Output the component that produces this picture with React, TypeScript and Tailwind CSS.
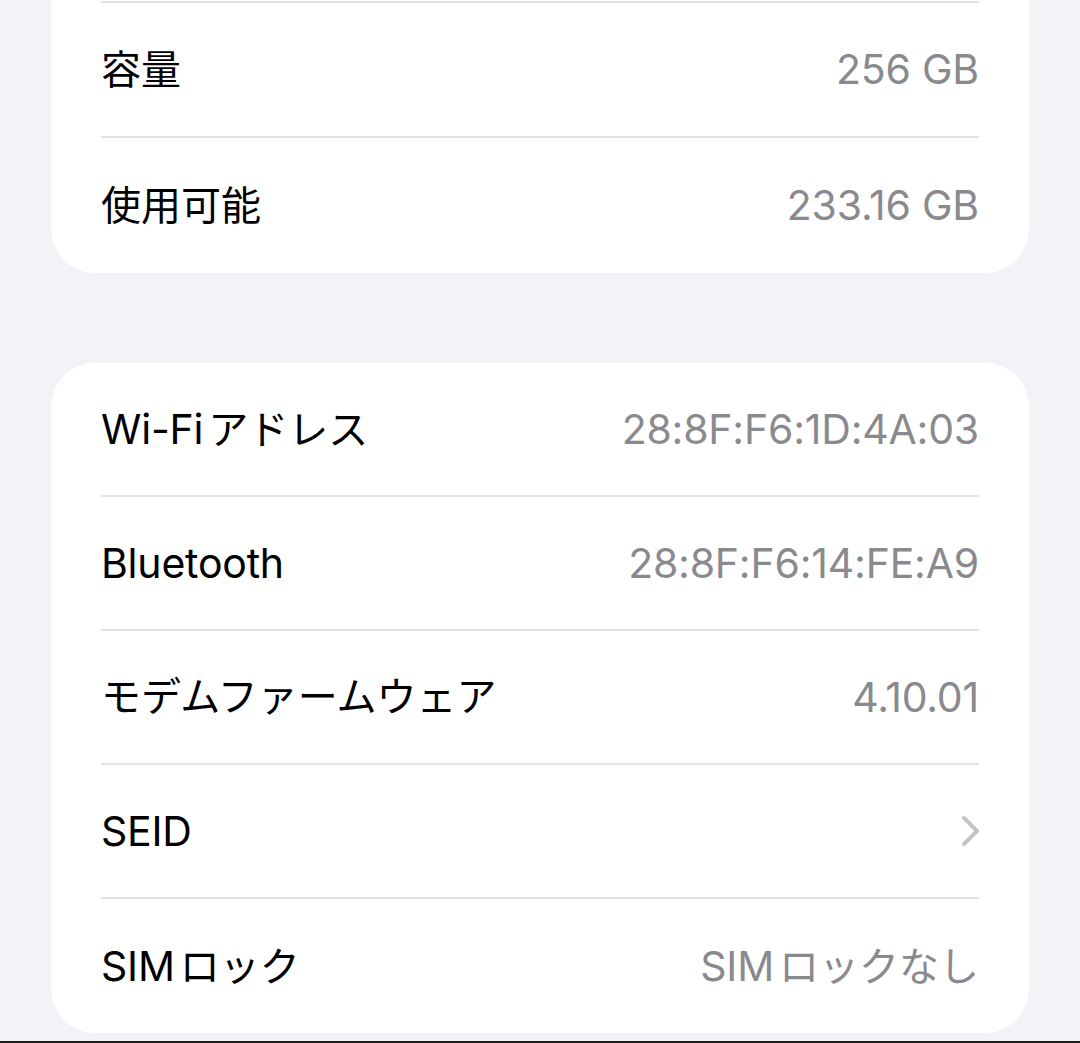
import React from "react";

type Row = { label: string; value?: string; chevron?: boolean };

const storageRows: Row[] = [
  { label: "容量", value: "256 GB" },
  { label: "使用可能", value: "233.16 GB" },
];

const networkRows: Row[] = [
  { label: "Wi-Fiアドレス", value: "28:8F:F6:1D:4A:03" },
  { label: "Bluetooth", value: "28:8F:F6:14:FE:A9" },
  { label: "モデムファームウェア", value: "4.10.01" },
  { label: "SEID", chevron: true },
  { label: "SIMロック", value: "SIMロックなし" },
];

// split text into latin / japanese runs so each gets its own size
const isCjk = (ch: string) => /[\u3000-\u30ff\u4e00-\u9fff]/.test(ch);

function MixedText({ text }: { text: string }) {
  const runs: { cjk: boolean; s: string }[] = [];
  for (const ch of text) {
    const cjk = isCjk(ch);
    const last = runs[runs.length - 1];
    if (last && last.cjk === cjk) last.s += ch;
    else runs.push({ cjk, s: ch });
  }
  return (
    <>
      {runs.map((r, i) =>
        r.cjk ? (
          <span key={i} className={"text-[40px] " + (i > 0 ? "ml-[5px]" : "")}>
            {r.s}
          </span>
        ) : (
          <span key={i} className="text-[41px] tracking-[-0.005em]">
            {r.s}
          </span>
        )
      )}
    </>
  );
}

function Chevron() {
  return (
    <svg width="20" height="32" viewBox="0 0 20 32" className="-mr-[2px]">
      <path
        d="M3 3 L16 16 L3 29"
        fill="none"
        stroke="#c4c4c7"
        strokeWidth="4"
        strokeLinecap="round"
        strokeLinejoin="round"
      />
    </svg>
  );
}

function InfoRow({ label, value, chevron, last, height }: Row & { last: boolean; height: string }) {
  return (
    <div
      className={
        "flex items-center justify-between mx-[50px] leading-none " +
        height +
        (last ? "" : " border-b-2 border-[#e3e3e8]")
      }
    >
      <span className="text-black">
        <MixedText text={label} />
      </span>
      {chevron ? (
        <Chevron />
      ) : (
        <span className="text-[#8a8a8e]">
          <MixedText text={value ?? ""} />
        </span>
      )}
    </div>
  );
}

export default function App() {
  return (
    <div
      className="h-[1043px] w-[1080px] overflow-hidden bg-[#f2f2f7] flex flex-col"
      style={{ fontFamily: '"Inter", "Noto Sans CJK JP", sans-serif' }}
    >
      <div className="mx-[51px] bg-white rounded-b-[44px] pt-px">
        <div className="mx-[50px] h-[2px] bg-[#e3e3e8]" />
        {storageRows.map((r, i) => (
          <InfoRow key={r.label} {...r} height="h-[135px]" last={i === storageRows.length - 1} />
        ))}
      </div>
      <div className="mx-[51px] mt-[90px] bg-white rounded-[44px]">
        {networkRows.map((r, i) => (
          <InfoRow key={r.label} {...r} height="h-[134px]" last={i === networkRows.length - 1} />
        ))}
      </div>
      <div className="flex-1" />
      <div className="h-[2px] bg-[#1a1a1a]" />
    </div>
  );
}
